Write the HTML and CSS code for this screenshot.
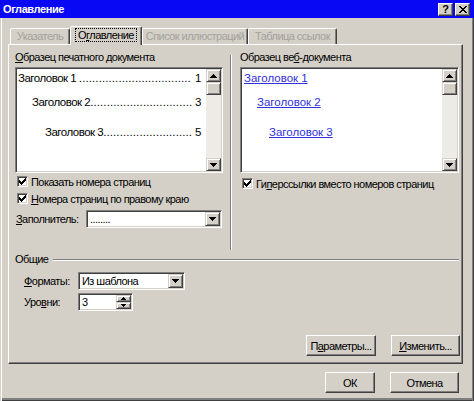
FILE: index.html
```html
<!DOCTYPE html>
<html lang="ru">
<head>
<meta charset="utf-8">
<title>Оглавление</title>
<link rel="stylesheet" href="styles.css">
</head>
<body>
<div class="window">
  <div class="titlebar">
    <span class="title">Оглавление</span>
    <div class="caption-buttons">
      <span class="cap-btn help">?</span>
      <span class="cap-btn close"><svg width="8" height="7" viewBox="0 0 8 7" shape-rendering="crispEdges"><path d="M0 0h2v1H0zM6 0h2v1H6zM1 1h2v1H1zM5 1h2v1H5zM2 2h4v1H2zM3 3h2v1H3zM2 4h4v1H2zM1 5h2v1H1zM5 5h2v1H5zM0 6h2v1H0zM6 6h2v1H6z" fill="#000"/></svg></span>
    </div>
  </div>
  <div class="client">
    <div class="tabs">
      <div class="tab disabled t1">Указатель</div>
      <div class="tab active t2"><span class="focus">О<u>г</u>лавление</span></div>
      <div class="tab disabled t3">Список иллюстраций</div>
      <div class="tab disabled t4">Таблица ссылок</div>
    </div>
    <div class="panel">
      <div class="columns">
        <div class="col col-print">
          <div class="label"><u>О</u>бразец печатного документа</div>
          <div class="preview sunken">
            <div class="preview-content print">
              <div class="toc-row lvl1"><span class="pre">Заголовок 1 </span><span class="leader">..................................</span><span class="pre"> 1</span></div>
              <div class="toc-row lvl2"><span class="pre">Заголовок 2</span><span class="leader">...............................</span><span class="pre"> 3</span></div>
              <div class="toc-row lvl3"><span class="pre">Заголовок 3</span><span class="leader">...........................</span><span class="pre"> 5</span></div>
            </div>
            <div class="scrollbar">
              <div class="sb-btn"><svg width="7" height="4" viewBox="0 0 7 4" shape-rendering="crispEdges"><path d="M3 0h1v1H3zM2 1h3v1H2zM1 2h5v1H1zM0 3h7v1H0z" fill="#000"/></svg></div>
              <div class="sb-thumb"></div>
              <div class="sb-track"></div>
              <div class="sb-btn"><svg width="7" height="4" viewBox="0 0 7 4" shape-rendering="crispEdges"><path d="M0 0h7v1H0zM1 1h5v1H1zM2 2h3v1H2zM3 3h1v1H3z" fill="#000"/></svg></div>
            </div>
          </div>
          <div class="check">
            <span class="box"><svg width="7" height="7" viewBox="0 0 7 7" shape-rendering="crispEdges"><path d="M6 0h1v1H6zM5 1h2v1H5zM0 2h1v1H0zM4 2h3v1H4zM0 3h2v1H0zM3 3h3v1H3zM0 4h5v1H0zM1 5h3v1H1zM2 6h1v1H2z" fill="#000"/></svg></span>
            <span>Показать номера страниц</span>
          </div>
          <div class="check">
            <span class="box"><svg width="7" height="7" viewBox="0 0 7 7" shape-rendering="crispEdges"><path d="M6 0h1v1H6zM5 1h2v1H5zM0 2h1v1H0zM4 2h3v1H4zM0 3h2v1H0zM3 3h3v1H3zM0 4h5v1H0zM1 5h3v1H1zM2 6h1v1H2z" fill="#000"/></svg></span>
            <span><u>Н</u>омера страниц по правому краю</span>
          </div>
          <div class="fill-row">
            <span class="fill-label"><u>З</u>аполнитель:</span>
            <div class="combo sunken fill-combo">
              <span class="combo-text">........</span>
              <span class="drop-btn"><svg width="7" height="4" viewBox="0 0 7 4" shape-rendering="crispEdges"><path d="M0 0h7v1H0zM1 1h5v1H1zM2 2h3v1H2zM3 3h1v1H3z" fill="#000"/></svg></span>
            </div>
          </div>
        </div>
        <div class="vsep"></div>
        <div class="col col-web">
          <div class="label">Образец ве<u>б</u>-документа</div>
          <div class="preview sunken">
            <div class="preview-content web">
              <div class="web-row lvl1"><span class="link">Заголовок 1</span></div>
              <div class="web-row lvl2"><span class="link">Заголовок 2</span></div>
              <div class="web-row lvl3"><span class="link">Заголовок 3</span></div>
            </div>
            <div class="scrollbar">
              <div class="sb-btn"><svg width="7" height="4" viewBox="0 0 7 4" shape-rendering="crispEdges"><path d="M3 0h1v1H3zM2 1h3v1H2zM1 2h5v1H1zM0 3h7v1H0z" fill="#000"/></svg></div>
              <div class="sb-thumb"></div>
              <div class="sb-track"></div>
              <div class="sb-btn"><svg width="7" height="4" viewBox="0 0 7 4" shape-rendering="crispEdges"><path d="M0 0h7v1H0zM1 1h5v1H1zM2 2h3v1H2zM3 3h1v1H3z" fill="#000"/></svg></div>
            </div>
          </div>
          <div class="check">
            <span class="box"><svg width="7" height="7" viewBox="0 0 7 7" shape-rendering="crispEdges"><path d="M6 0h1v1H6zM5 1h2v1H5zM0 2h1v1H0zM4 2h3v1H4zM0 3h2v1H0zM3 3h3v1H3zM0 4h5v1H0zM1 5h3v1H1zM2 6h1v1H2z" fill="#000"/></svg></span>
            <span>Ги<u>п</u>ерссылки вместо номеров страниц</span>
          </div>
        </div>
      </div>
      <div class="group">
        <div class="group-title"><span>Общие</span><span class="hline"></span></div>
        <div class="field-row">
          <span class="field-label"><u>Ф</u>орматы:</span>
          <div class="combo sunken formats-combo">
            <span class="combo-text">Из шаблона</span>
            <span class="drop-btn"><svg width="7" height="4" viewBox="0 0 7 4" shape-rendering="crispEdges"><path d="M0 0h7v1H0zM1 1h5v1H1zM2 2h3v1H2zM3 3h1v1H3z" fill="#000"/></svg></span>
          </div>
        </div>
        <div class="field-row levels">
          <span class="field-label">Уро<u>в</u>ни:</span>
          <div class="spin sunken">
            <span class="combo-text">3</span>
            <span class="spin-btns">
              <span class="spin-btn"><svg width="5" height="3" viewBox="0 0 5 3" shape-rendering="crispEdges"><path d="M2 0h1v1H2zM1 1h3v1H1zM0 2h5v1H0z" fill="#000"/></svg></span>
              <span class="spin-btn"><svg width="5" height="3" viewBox="0 0 5 3" shape-rendering="crispEdges"><path d="M0 0h5v1H0zM1 1h3v1H1zM2 2h1v1H2z" fill="#000"/></svg></span>
            </span>
          </div>
        </div>
      </div>
      <div class="panel-buttons">
        <div class="btn btn-params">П<u>а</u>раметры...</div>
        <div class="btn btn-change"><u>И</u>зменить...</div>
      </div>
    </div>
    <div class="dialog-buttons">
      <div class="btn btn-ok">ОК</div>
      <div class="btn btn-cancel">Отмена</div>
    </div>
  </div>
</div>
</body>
</html>
```

FILE: styles.css
```css
* { box-sizing: border-box; }

html, body {
  margin: 0;
  padding: 0;
}

body {
  width: 474px;
  height: 401px;
  overflow: hidden;
  background: #d4d0c8;
  font-family: "Liberation Sans", Arial, sans-serif;
  font-size: 11px;
  letter-spacing: -0.55px;
  color: #000;
}

u { text-decoration: underline; text-underline-offset: 1px; }

.window {
  width: 474px;
  height: 401px;
  display: flex;
  flex-direction: column;
  background: #d4d0c8;
}

/* title bar */
.titlebar {
  height: 18px;
  flex: none;
  background: #0808f4;
  display: flex;
  align-items: center;
  justify-content: space-between;
  padding: 0 4px 0 3px;
}

.title {
  color: #fff;
  font-weight: bold;
  font-size: 11px;
  letter-spacing: -0.4px;
}

.caption-buttons {
  display: flex;
  gap: 2px;
}

.cap-btn {
  width: 15px;
  height: 13px;
  background: #d4d0c8;
  border: 1px solid;
  border-color: #fff #404040 #404040 #fff;
  box-shadow: inset -1px -1px 0 #808080;
  display: flex;
  align-items: center;
  justify-content: center;
  font-weight: bold;
  font-size: 11px;
  line-height: 11px;
  letter-spacing: 0;
}

/* client area */
.client {
  flex: 1;
  padding-left: 8px;
  box-shadow: inset 1px 0 0 #d4d0c8, inset 2px 0 0 #fff,
              inset -1px 0 0 #404040, inset -2px 0 0 #808080,
              inset 0 -1px 0 #404040, inset 0 -3px 0 #808080;
}

/* tabs */
.tabs {
  margin-top: 8px;
  height: 18px;
  display: flex;
  align-items: flex-end;
  padding-left: 2px;
}

.tab {
  height: 16px;
  border: 1px solid;
  border-bottom: none;
  border-color: #fff #404040 transparent #fff;
  box-shadow: inset -1px 0 0 #808080;
  border-radius: 2px 2px 0 0;
  background: #d4d0c8;
  display: flex;
  align-items: center;
  justify-content: center;
  white-space: nowrap;
  padding-bottom: 1px;
}

.tab.disabled { color: #a3a19c; }

.t1 { width: 60px; }
.t2 { width: 72px; }
.t3 { width: 106px; }
.t4 { width: 89px; }

.tab.active {
  height: 19px;
  margin-bottom: -1px;
  position: relative;
  z-index: 1;
  padding-bottom: 3px;
}

.focus {
  outline: 1px dotted #000;
  outline-offset: 0;
  padding: 0 2px;
  line-height: 12px;
}

/* panel */
.panel {
  width: 455px;
  height: 320px;
  border: 1px solid;
  border-color: #fff #404040 #404040 #fff;
  box-shadow: inset -1px -1px 0 #808080;
  display: flex;
  flex-direction: column;
}

.columns {
  margin-top: 6px;
  height: 199px;
  display: flex;
  padding-left: 6px;
}

.col { display: flex; flex-direction: column; }
.col-print { width: 208px; }
.col-web { width: 219px; margin-left: 8px; }

.vsep {
  width: 2px;
  margin-left: 7px;
  margin-top: 4px;
  height: 195px;
  border-left: 1px solid #808080;
  border-right: 1px solid #fff;
}

.label {
  line-height: 13px;
  height: 13px;
  white-space: nowrap;
}

.sunken {
  background: #fff;
  border: 1px solid;
  border-color: #808080 #fff #fff #808080;
  box-shadow: inset 1px 1px 0 #404040, inset -1px -1px 0 #d4d0c8;
  padding: 1px;
}

.preview {
  margin-top: 3px;
  height: 106px;
  display: flex;
}

.preview-content {
  flex: 1;
  min-width: 0;
}

.print { padding: 0 5px 0 1px; }

.toc-row {
  display: flex;
  height: 14px;
  line-height: 14px;
  font-size: 11.5px;
  letter-spacing: -0.5px;
  white-space: nowrap;
}

.pre { white-space: pre; flex: none; }

.leader {
  flex: 1;
  min-width: 0;
  text-align: left;
  letter-spacing: 0.1px;
}

.lvl1 { margin-top: 2px; }
.lvl2 { margin-top: 10px; }
.lvl3 { margin-top: 16px; }

.print .lvl2 { padding-left: 14px; }
.print .lvl3 { padding-left: 27px; }

.web { padding-left: 2px; }

.web-row {
  height: 14px;
  line-height: 14px;
  font-size: 11.5px;
  letter-spacing: 0;
  white-space: nowrap;
}

.web .lvl2 { padding-left: 13px; }
.web .lvl3 { padding-left: 25px; }

.link {
  color: #3030d8;
  text-decoration: underline;
}

/* scrollbar */
.scrollbar {
  width: 15px;
  flex: none;
  display: flex;
  flex-direction: column;
  background: #edebe6;
}

.sb-btn, .sb-thumb, .drop-btn, .spin-btn {
  background: #d4d0c8;
  border: 1px solid;
  border-color: #d4d0c8 #404040 #404040 #d4d0c8;
  box-shadow: inset 1px 1px 0 #fff, inset -1px -1px 0 #808080;
}

.sb-btn {
  height: 13px;
  display: flex;
  align-items: center;
  justify-content: center;
}

.sb-thumb { height: 13px; }
.sb-track { flex: 1; }

/* checkboxes */
.check {
  height: 17px;
  display: flex;
  align-items: center;
  white-space: nowrap;
  padding-left: 2px;
}

.col-print .check:first-of-type { margin-top: 2px; }
.col-web .check { margin-top: 2px; }

.box {
  width: 11px;
  height: 11px;
  flex: none;
  margin-right: 3px;
  background: #fff;
  border: 1px solid;
  border-color: #808080 #fff #fff #808080;
  box-shadow: inset 1px 1px 0 #404040, inset -1px -1px 0 #d4d0c8;
  display: flex;
  align-items: center;
  justify-content: center;
}

/* combos */
.fill-row {
  margin-top: 3px;
  display: flex;
  align-items: center;
  height: 18px;
}

.fill-label {
  width: 71px;
  padding-left: 1px;
  white-space: nowrap;
}

.combo, .spin {
  height: 18px;
  display: flex;
  align-items: center;
}

.fill-combo { width: 136px; }

.combo-text {
  flex: 1;
  padding-left: 2px;
  white-space: nowrap;
}

.drop-btn {
  width: 15px;
  height: 14px;
  flex: none;
  display: flex;
  align-items: center;
  justify-content: center;
}

/* group */
.group { margin-top: 3px; }

.group-title {
  height: 13px;
  line-height: 13px;
  display: flex;
  align-items: center;
  padding-left: 6px;
}

.hline {
  flex: 1;
  height: 2px;
  margin-left: 5px;
  margin-right: 3px;
  border-top: 1px solid #808080;
  border-bottom: 1px solid #fff;
}

.field-row {
  margin-top: 6px;
  display: flex;
  align-items: center;
  height: 18px;
  padding-left: 15px;
}

.field-row.levels { margin-top: 3px; }

.field-label {
  width: 54px;
  white-space: nowrap;
}

.formats-combo { width: 107px; }

.spin { width: 55px; }

.spin-btns {
  width: 15px;
  height: 14px;
  flex: none;
  display: flex;
  flex-direction: column;
}

.spin-btn {
  flex: 1;
  display: flex;
  align-items: center;
  justify-content: center;
}

/* buttons */
.btn {
  height: 21px;
  background: #d4d0c8;
  border: 1px solid;
  border-color: #fff #404040 #404040 #fff;
  box-shadow: inset -1px -1px 0 #808080;
  display: flex;
  align-items: center;
  justify-content: center;
  white-space: nowrap;
}

.panel-buttons {
  margin-top: 24px;
  display: flex;
  justify-content: flex-end;
  gap: 15px;
  padding-right: 2px;
}

.btn-params { width: 70px; }
.btn-change { width: 69px; }

.dialog-buttons {
  margin-top: 8px;
  display: flex;
  justify-content: flex-end;
  gap: 15px;
  padding-right: 15px;
}

.btn-ok { width: 50px; }
.btn-cancel { width: 69px; }
```
